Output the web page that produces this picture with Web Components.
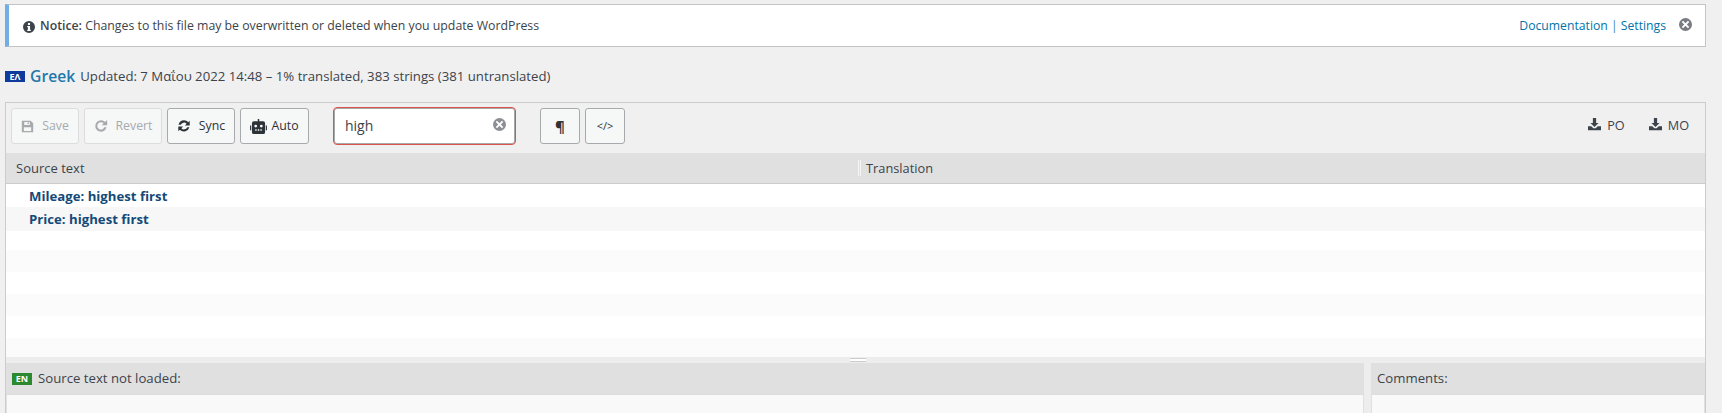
<!DOCTYPE html>
<html><head><meta charset="utf-8"><style>
html,body{margin:0;height:413px;overflow:hidden;background:#f0f0f1}
body{font:13px/1.4 "Open Sans","Noto Sans",sans-serif;color:#3c434a}
</style></head><body>
<template id="t-notice"><style>
:host{display:flex;align-items:center;box-sizing:border-box;height:43px;margin:4px 16px 0 5px;background:#fff;border:1px solid #c3c4c7;border-left:4px solid #72aee6;padding:0 13px 0 14px;font-size:12.3px}
svg{width:12px;height:12px;margin-right:5px;margin-top:2px;fill:#3c434a}
.g{flex:1}
a{color:#0073aa}
.x{width:13px;height:13px;fill:#787c82;margin:-2px 0 0 13px}
.l{font-size:12.2px;color:#3c8cb5}
::slotted(b){font-weight:600}
</style><svg viewBox="0 0 16 16"><path d="M8 0a8 8 0 1 0 0 16A8 8 0 0 0 8 0zM6.600 2.600h2.800v2.600H6.600zM5.600 6.600h3.800v5h1v1.800H5.600v-1.800h1v-3.200h-1z" fill-rule="evenodd"/></svg><span class="g"><slot></slot></span><span class="l"><a>Documentation</a> | <a>Settings</a></span><svg class="x" viewBox="0 0 16 16"><path fill-rule="evenodd" d="M8 0a8 8 0 1 0 0 16A8 8 0 0 0 8 0zM5 3.400l3 3 3-3L12.600 5l-3 3 3 3-1.600 1.600-3-3-3 3L3.400 11l3-3-3-3z"/></svg></template>

<template id="t-heading"><style>
:host{display:flex;align-items:center;height:24px;margin:17px 0 0 5px;font-size:13.2px;color:#3c434a}
i{font:700 9px/11px "Open Sans",sans-serif;background:#0d3a9c;color:#fff;width:20px;height:11px;text-align:center;margin-right:5px}
a{font-size:15.7px;font-weight:600;color:#1f78ab;margin-right:5px}
</style><i>ΕΛ</i><a>Greek</a><span><slot></slot></span></template>

<template id="t-btn"><style>
:host{display:inline-flex;align-items:center;justify-content:center;box-sizing:border-box;height:36px;border:1px solid #a7aaad;border-radius:3px;background:#f6f7f7;color:#2c3338;font-size:12.3px;gap:8px}
:host([disabled]){color:#a7aaad;border-color:#dcdcde}
::slotted(svg){fill:currentColor;display:block}
</style><slot></slot></template>

<template id="t-toolbar"><style>
:host{display:flex;align-items:center;box-sizing:border-box;height:50px;padding:0 0 4px 5px;gap:5px;background:#f0f0f1}
.s{display:flex;align-items:center;box-sizing:border-box;width:183px;height:38px;margin:0 19px;background:#fff;border:1px solid #d9534f;box-shadow:inset 0 0 0 1px #a8a8a8;border-radius:4px;padding:0 9px 0 11px;font-size:14px;color:#3c434a}
.s span{flex:1}
.s svg{width:13px;height:13px;fill:#8c8f94;margin:-3px 0 0}
.d{margin-left:auto;display:flex;gap:24px;padding-right:16px;font-size:12.7px;color:#3c434a}
.d span{display:flex;align-items:center;gap:6px}
.d svg{width:13px;height:13px;fill:#3c434a;margin-top:-3px}
</style><slot></slot><div class="s"><span>high</span><svg viewBox="0 0 16 16"><path fill-rule="evenodd" d="M8 0a8 8 0 1 0 0 16A8 8 0 0 0 8 0zM5 3.400l3 3 3-3L12.600 5l-3 3 3 3-1.600 1.600-3-3-3 3L3.400 11l3-3-3-3z"/></svg></div><slot name="view"></slot><div class="d"><span><svg viewBox="0 0 16 16"><path d="M6 0h4v6h3l-5 5-5-5h3zM0 10h4l2.500 2.500h3L12 10h4v5H0z"/></svg>PO</span><span><svg viewBox="0 0 16 16"><path d="M6 0h4v6h3l-5 5-5-5h3zM0 10h4l2.500 2.500h3L12 10h4v5H0z"/></svg>MO</span></div></template>

<template id="t-cols"><style>
:host{display:grid;grid-template-columns:852px 1fr;box-sizing:border-box;height:31px;align-items:center;background:#e0e0e0;border-bottom:1px solid #ccc;font-size:13px;color:#3c434a}
div{padding-left:10px;line-height:16px}
div+div{border-left:3px double #f5f5f5;height:16px;padding-left:5px;font-size:12.8px}
</style><div>Source text</div><div>Translation</div></template>

<template id="t-rows"><style>
:host{display:block;height:173px;overflow:hidden;background:repeating-linear-gradient(#fff 0 22px,#fbfbfb 22px 44px);font-size:13.2px;font-weight:700;color:#144a78}
p{margin:0;height:23px;line-height:24px;padding-left:23px;background:#fff}
p+p{height:24px;line-height:24px;background:#f7f7f7}
</style><p>Mileage: highest first</p><p>Price: highest first</p></template>

<template id="t-pane"><style>
:host{display:block;box-sizing:border-box;background:#f9f9f9;height:50px;font-size:13.2px;color:#3c434a;border:solid #e0e0e0;border-width:0 1px}
h4{font:inherit;height:32px;box-sizing:border-box;background:#e0e0e0;border-bottom:1px solid #ddd;margin:0 -1px;padding-left:6px;display:flex;align-items:center;gap:3px}
</style><h4><slot></slot></h4></template>

<template id="t-badge"><style>
:host{display:block;font:700 9px/12px "Open Sans",sans-serif;background:#2b8a2f;color:#fff;width:20px;height:12px;text-align:center;margin:0 3px 0 0}
</style><slot></slot></template>

<template id="t-editor"><style>
:host{display:block;margin:14px 16px 0 5px;border:1px solid #ccc;border-width:1px 1px 0;box-sizing:border-box}
.g{display:block;height:6px;background:#ededed;position:relative}
.g:after{content:"";position:absolute;left:844px;top:1px;width:16px;height:1px;border:solid #ccc;border-width:1px 0;padding-bottom:1px;background:#fff}
.b{display:grid;grid-template-columns:1358px 1fr;gap:7px;background:#ededed;height:60px}
</style><slot name="tb"></slot><slot name="cols"></slot><slot name="rows"></slot><span class="g"></span><div class="b"><slot name="a"></slot><slot name="b"></slot></div></template>

<loco-notice><b>Notice:</b> Changes to this file may be overwritten or deleted when you update WordPress</loco-notice>
<loco-heading>Updated: 7 Μαΐου 2022 14:48 – 1% translated, 383 strings (381 untranslated)</loco-heading>
<loco-editor>
<loco-toolbar slot="tb">
<loco-btn disabled style="width:68px"><svg width="13" height="13" viewBox="0 0 16 16"><path fill-rule="evenodd" d="M1 1h11l3 3v11H1zM4 2.500V6h7V2.500zM8 3h2v2H8zM3.500 9v4.500h9V9z"/></svg>Save</loco-btn>
<loco-btn disabled style="width:78px"><svg width="14" height="14" viewBox="0 0 16 16"><path d="M8 1.500a6.500 6.500 0 1 0 6.300 8h-2.500A4.200 4.200 0 1 1 11 5L8.700 7.200H15V1l-2.300 2.300A6.500 6.500 0 0 0 8 1.500z"/></svg>Revert</loco-btn>
<loco-btn style="width:68px"><svg width="14" height="14" viewBox="0 0 16 16"><path d="M8 1.500c2 0 3.700.9 4.800 2.300L14.500 2v5.500H9l2-2A4 4 0 0 0 4.300 6.500H1.800A6.500 6.500 0 0 1 8 1.500zM1.500 8.500H7l-2 2a4 4 0 0 0 6.700-1h2.500a6.500 6.500 0 0 1-11 2.700L1.500 14z"/></svg>Sync</loco-btn>
<loco-btn style="width:69px;gap:4px"><svg width="17" height="15" viewBox="0 0 18 16"><path fill-rule="evenodd" d="M8.200 0h1.600v2.500H14a2 2 0 0 1 2 2V14a2 2 0 0 1-2 2H4a2 2 0 0 1-2-2V4.500a2 2 0 0 1 2-2h4.200zM6 6a1.500 1.500 0 1 0 0 3 1.500 1.500 0 0 0 0-3zm6 0a1.500 1.500 0 1 0 0 3 1.500 1.500 0 0 0 0-3zM5.500 11v1.500h1.500V11zm2.700 0v1.500h1.600V11zm2.800 0v1.500h1.500V11zM0 7h1.200v5H0zm16.800 0H18v5h-1.200z"/></svg>Auto</loco-btn>
<loco-btn slot="view" style="width:40px;font-weight:700;font-size:15px">¶</loco-btn>
<loco-btn slot="view" style="width:40px;font-size:11px;font-weight:400">&lt;/&gt;</loco-btn>
</loco-toolbar>
<loco-cols slot="cols"></loco-cols>
<loco-rows slot="rows"></loco-rows>
<loco-pane slot="a"><loco-badge>EN</loco-badge>Source text not loaded:</loco-pane>
<loco-pane slot="b">Comments:</loco-pane>
</loco-editor>
<script>
for(const [n,t] of [['loco-notice','t-notice'],['loco-heading','t-heading'],['loco-btn','t-btn'],['loco-toolbar','t-toolbar'],['loco-cols','t-cols'],['loco-rows','t-rows'],['loco-pane','t-pane'],['loco-badge','t-badge'],['loco-editor','t-editor']]){
 customElements.define(n,class extends HTMLElement{constructor(){super();this.attachShadow({mode:'open'}).append(document.getElementById(t).content.cloneNode(true))}});
}
</script>
</body></html>
